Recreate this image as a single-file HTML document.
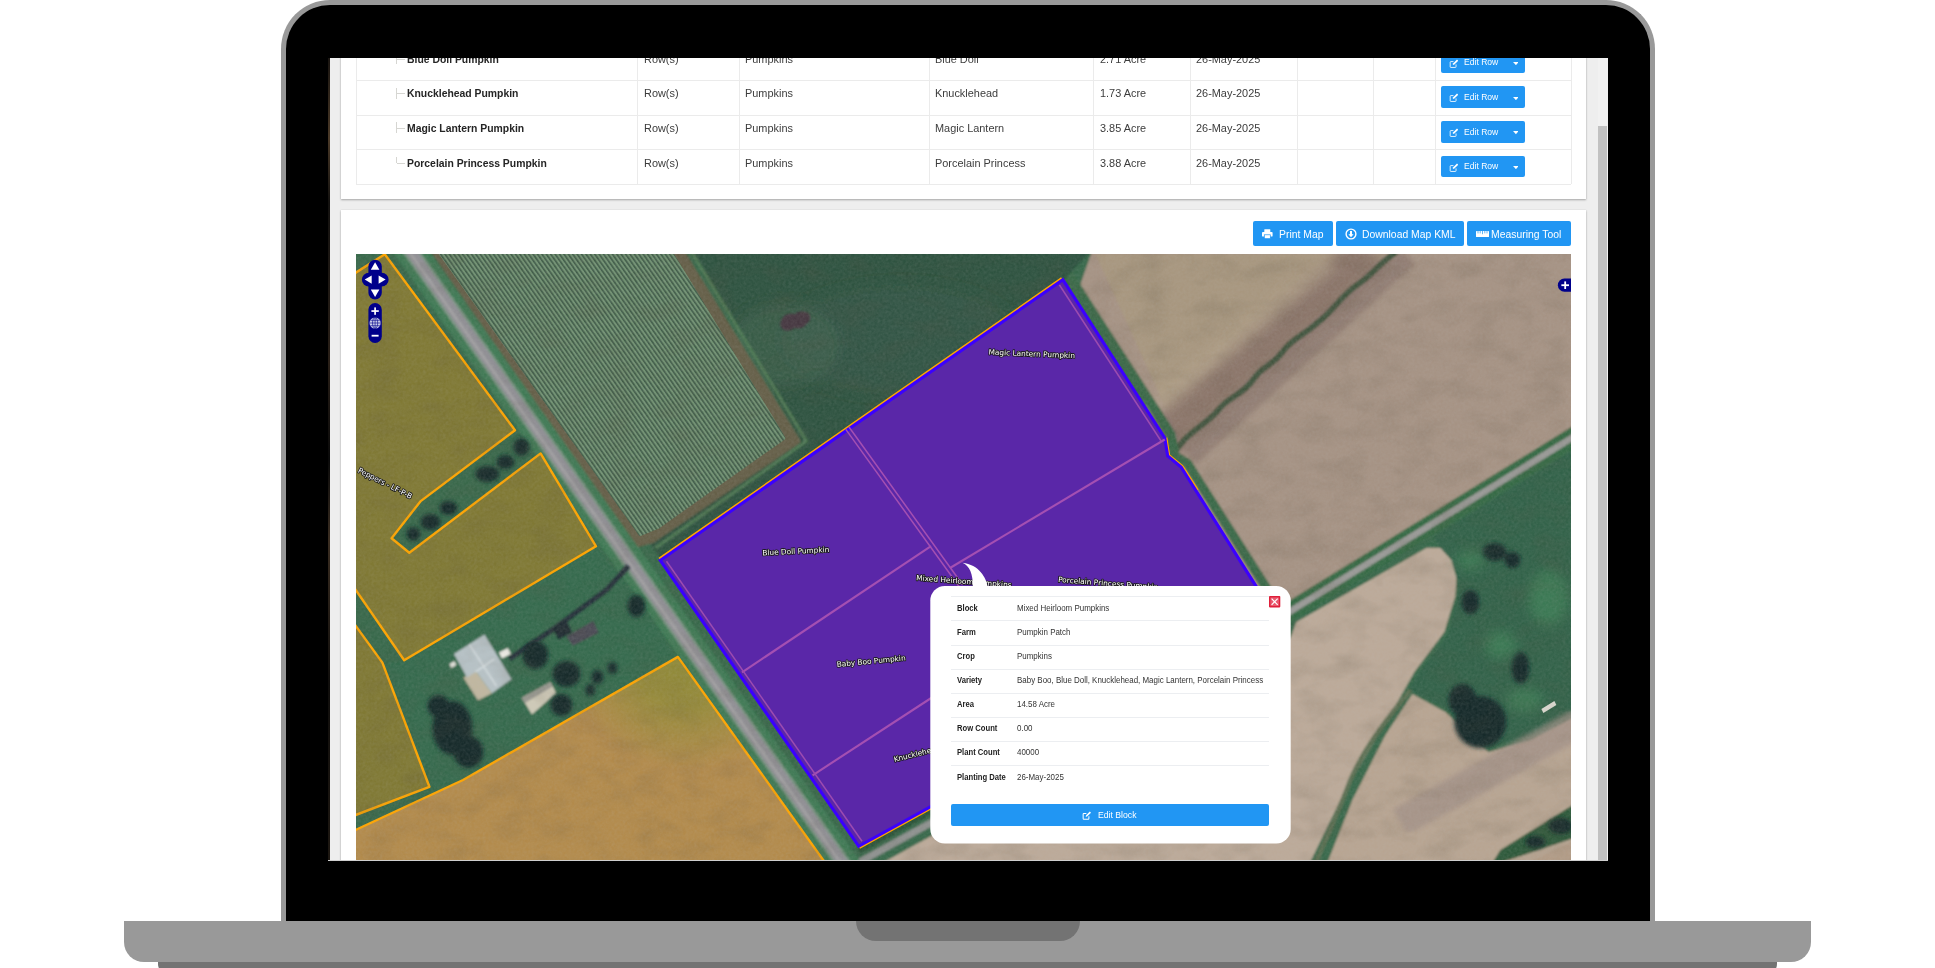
<!DOCTYPE html>
<html lang="en">
<head>
<meta charset="utf-8">
<title>Farm Map</title>
<style>
*{box-sizing:border-box;margin:0;padding:0}
html,body{width:1935px;height:968px;overflow:hidden;background:#fff}
body{position:relative;font-family:"Liberation Sans",sans-serif;color:#333}
#lid{position:absolute;left:281px;top:0;width:1374px;height:940px;background:#000;border:5px solid #999;border-bottom:0;border-radius:49px 49px 0 0}
#base{position:absolute;left:124px;top:921px;width:1687px;height:41px;background:#999;border-radius:0 0 20px 20px}
#notch{position:absolute;left:856px;top:921px;width:224px;height:20px;background:#737373;border-radius:0 0 20px 20px}
#foot{position:absolute;left:158px;top:962px;width:1619px;height:12px;background:#737373;border-radius:0 0 10px 10px}
#screen{position:absolute;left:328px;top:58px;width:1280px;height:803px;background:#eee;overflow:hidden}
#pg{position:absolute;left:-328px;top:-58px;width:1935px;height:968px;will-change:transform}
.card{position:absolute;background:#fff;box-shadow:0 1px 2px rgba(0,0,0,.3),0 0 1px rgba(0,0,0,.12)}
.hl{position:absolute;height:1px;background:#ebebeb;left:356px;width:1215px}
.vl{position:absolute;width:1px;background:#ebebeb;top:40px;height:144px}
.t{position:absolute;white-space:nowrap;font-size:10.6px;line-height:14px;color:#3c3c3c;transform-origin:0 50%;transform:scaleX(1.03)}
.t.b{font-weight:bold;font-size:10.4px;color:#252525;transform:scaleX(1.0)}
.btn{position:absolute;background:#2196f3;border-radius:2px;color:#fff;white-space:nowrap}
.btn span{position:absolute;white-space:nowrap;transform-origin:0 50%}
.btn svg{position:absolute}
.tree{position:absolute;border-left:1px solid #d6d6d2;border-bottom:0;width:8px}
.tree i{position:absolute;left:0;width:8px;height:1px;background:#d6d6d2}
</style>
</head>
<body>
<div id="lid"></div>
<div id="base"></div>
<div id="notch"></div>
<div id="foot"></div>
<div id="screen"><div id="pg">

<div style="position:absolute;left:328px;top:58px;width:2px;height:802px;background:linear-gradient(#1a1511,#4b3a28 10%,#141210 18%,#2a2018 38%,#0a0a0a 50%,#3b2e22 60%,#100e0c 78%,#1e1812)"></div>
<div id="bottomline" style="position:absolute;left:328px;top:860px;width:1280px;height:1px;background:#cfcfcf;z-index:9"></div>
<div class="card" style="left:341px;top:20px;width:1245px;height:179px"></div>
<div class="card" style="left:341px;top:210px;width:1245px;height:700px"></div>
<div style="position:absolute;left:1598px;top:58px;width:10px;height:802px;background:#f1f1f1"></div>
<div style="position:absolute;left:1598px;top:126px;width:9px;height:760px;background:#c1c1c1"></div>
<div class="hl" style="top:79.8px"></div>
<div class="hl" style="top:114.5px"></div>
<div class="hl" style="top:149.2px"></div>
<div class="hl" style="top:183.9px"></div>
<div class="vl" style="left:356px"></div>
<div class="vl" style="left:637.4px"></div>
<div class="vl" style="left:738.7px"></div>
<div class="vl" style="left:928.8px"></div>
<div class="vl" style="left:1092.6px"></div>
<div class="vl" style="left:1189.6px"></div>
<div class="vl" style="left:1296.7px"></div>
<div class="vl" style="left:1372.8px"></div>
<div class="vl" style="left:1434.7px"></div>
<div class="vl" style="left:1570.5px"></div>
<div class="t b" style="left:407px;top:52.6px">Blue Doll Pumpkin</div>
<div class="t" style="left:644.4px;top:51.6px">Row(s)</div>
<div class="t" style="left:745.4px;top:51.6px">Pumpkins</div>
<div class="t" style="left:935px;top:51.6px">Blue Doll</div>
<div class="t" style="left:1099.6px;top:51.6px">2.71 Acre</div>
<div class="t" style="left:1195.8px;top:51.6px">26-May-2025</div>
<div class="tree" style="left:396px;top:53.0px;height:11px"><i style="top:5.5px"></i></div>
<div class="btn" style="left:1441.2px;top:51.6px;width:84px;height:21.8px"><svg style="left:7.6px;top:7.2px" width="9.4" height="9.4" viewBox="0 0 20 20" fill="none" stroke="#fff" stroke-width="1.8"><path d="M15 11.5V16.5a1.5 1.5 0 0 1-1.5 1.5H4a1.5 1.5 0 0 1-1.5-1.5V7A1.5 1.5 0 0 1 4 5.5h5.5"/><path d="M8 13l1-4 8-8 2.6 2.6-8 8z" fill="#fff" stroke="none"/></svg><span style="left:23px;top:4.7px;font-size:9.2px;line-height:12px;transform:scaleX(.932)">Edit Row</span><svg style="left:71.5px;top:10.4px" width="5.8" height="3.2" viewBox="0 0 6 3.4"><path d="M0 0h6L3 3.4z" fill="#fff"/></svg></div>
<div class="t b" style="left:407px;top:87.3px">Knucklehead Pumpkin</div>
<div class="t" style="left:644.4px;top:86.2px">Row(s)</div>
<div class="t" style="left:745.4px;top:86.2px">Pumpkins</div>
<div class="t" style="left:935px;top:86.2px">Knucklehead</div>
<div class="t" style="left:1099.6px;top:86.2px">1.73 Acre</div>
<div class="t" style="left:1195.8px;top:86.2px">26-May-2025</div>
<div class="tree" style="left:396px;top:87.7px;height:11px"><i style="top:5.5px"></i></div>
<div class="btn" style="left:1441.2px;top:86.3px;width:84px;height:21.8px"><svg style="left:7.6px;top:7.2px" width="9.4" height="9.4" viewBox="0 0 20 20" fill="none" stroke="#fff" stroke-width="1.8"><path d="M15 11.5V16.5a1.5 1.5 0 0 1-1.5 1.5H4a1.5 1.5 0 0 1-1.5-1.5V7A1.5 1.5 0 0 1 4 5.5h5.5"/><path d="M8 13l1-4 8-8 2.6 2.6-8 8z" fill="#fff" stroke="none"/></svg><span style="left:23px;top:4.7px;font-size:9.2px;line-height:12px;transform:scaleX(.932)">Edit Row</span><svg style="left:71.5px;top:10.4px" width="5.8" height="3.2" viewBox="0 0 6 3.4"><path d="M0 0h6L3 3.4z" fill="#fff"/></svg></div>
<div class="t b" style="left:407px;top:122.0px">Magic Lantern Pumpkin</div>
<div class="t" style="left:644.4px;top:121.0px">Row(s)</div>
<div class="t" style="left:745.4px;top:121.0px">Pumpkins</div>
<div class="t" style="left:935px;top:121.0px">Magic Lantern</div>
<div class="t" style="left:1099.6px;top:121.0px">3.85 Acre</div>
<div class="t" style="left:1195.8px;top:121.0px">26-May-2025</div>
<div class="tree" style="left:396px;top:122.4px;height:11px"><i style="top:5.5px"></i></div>
<div class="btn" style="left:1441.2px;top:121.0px;width:84px;height:21.8px"><svg style="left:7.6px;top:7.2px" width="9.4" height="9.4" viewBox="0 0 20 20" fill="none" stroke="#fff" stroke-width="1.8"><path d="M15 11.5V16.5a1.5 1.5 0 0 1-1.5 1.5H4a1.5 1.5 0 0 1-1.5-1.5V7A1.5 1.5 0 0 1 4 5.5h5.5"/><path d="M8 13l1-4 8-8 2.6 2.6-8 8z" fill="#fff" stroke="none"/></svg><span style="left:23px;top:4.7px;font-size:9.2px;line-height:12px;transform:scaleX(.932)">Edit Row</span><svg style="left:71.5px;top:10.4px" width="5.8" height="3.2" viewBox="0 0 6 3.4"><path d="M0 0h6L3 3.4z" fill="#fff"/></svg></div>
<div class="t b" style="left:407px;top:156.8px">Porcelain Princess Pumpkin</div>
<div class="t" style="left:644.4px;top:155.7px">Row(s)</div>
<div class="t" style="left:745.4px;top:155.7px">Pumpkins</div>
<div class="t" style="left:935px;top:155.7px">Porcelain Princess</div>
<div class="t" style="left:1099.6px;top:155.7px">3.88 Acre</div>
<div class="t" style="left:1195.8px;top:155.7px">26-May-2025</div>
<div class="tree" style="left:396px;top:157.1px;height:6px"><i style="top:5.5px"></i></div>
<div class="btn" style="left:1441.2px;top:155.7px;width:84px;height:21.8px"><svg style="left:7.6px;top:7.2px" width="9.4" height="9.4" viewBox="0 0 20 20" fill="none" stroke="#fff" stroke-width="1.8"><path d="M15 11.5V16.5a1.5 1.5 0 0 1-1.5 1.5H4a1.5 1.5 0 0 1-1.5-1.5V7A1.5 1.5 0 0 1 4 5.5h5.5"/><path d="M8 13l1-4 8-8 2.6 2.6-8 8z" fill="#fff" stroke="none"/></svg><span style="left:23px;top:4.7px;font-size:9.2px;line-height:12px;transform:scaleX(.932)">Edit Row</span><svg style="left:71.5px;top:10.4px" width="5.8" height="3.2" viewBox="0 0 6 3.4"><path d="M0 0h6L3 3.4z" fill="#fff"/></svg></div>
<div class="btn" style="left:1252.6px;top:221.2px;width:80.2px;height:25.2px"><svg style="left:9.6px;top:7.6px" width="10.6" height="10" viewBox="0 0 12 11" fill="#fff"><rect x="2.6" y="0" width="6.8" height="3.6" rx=".5"/><rect x="0" y="3.2" width="12" height="5.2" rx="1"/><rect x="2.6" y="6.4" width="6.8" height="4.4" stroke="#2196f3" stroke-width=".8"/></svg><span style="left:26.4px;top:5.5px;font-size:10.7px;line-height:14px;transform:scaleX(.972)">Print Map</span></div>
<div class="btn" style="left:1336px;top:221.2px;width:127.9px;height:25.2px"><svg style="left:9px;top:6.4px" width="12" height="12" viewBox="0 0 12 12"><circle cx="6" cy="6" r="4.9" fill="none" stroke="#fff" stroke-width="1.4"/><path d="M6 9.2L3.4 6.3H5V3h2v3.3h1.6z" fill="#fff"/></svg><span style="left:26.4px;top:5.5px;font-size:10.7px;line-height:14px;transform:scaleX(.972)">Download Map KML</span></div>
<div class="btn" style="left:1467.3px;top:221.2px;width:103.8px;height:25.2px"><svg style="left:8.6px;top:9.6px" width="13" height="6" viewBox="0 0 13 6"><rect x="0" y="0" width="13" height="6" rx=".6" fill="#fff"/><path d="M2 0v2.4M4.2 0v2.4M6.5 0v3.2M8.8 0v2.4M11 0v2.4" stroke="#2196f3" stroke-width=".7"/></svg><span style="left:23.6px;top:5.5px;font-size:10.7px;line-height:14px;transform:scaleX(.972)">Measuring Tool</span></div>
<svg style="position:absolute;left:355.6px;top:254px" width="1215.4" height="606" viewBox="355.6 254 1215.4 606">
<defs>
<pattern id="stripe" width="3.6" height="10" patternUnits="userSpaceOnUse" patternTransform="rotate(-35.2)"><rect width="3.6" height="10" fill="#719172"/><rect width="1.6" height="10" fill="#3f5b48"/></pattern>
<filter id="bl" x="-5%" y="-5%" width="110%" height="110%"><feGaussianBlur stdDeviation="1.1"/></filter>
<filter id="bl0" x="-5%" y="-5%" width="110%" height="110%"><feGaussianBlur stdDeviation="0.45"/></filter>
<filter id="bl2" x="-10%" y="-10%" width="120%" height="120%"><feGaussianBlur stdDeviation="2.2"/></filter>
<filter id="bl5" x="-20%" y="-20%" width="140%" height="140%"><feGaussianBlur stdDeviation="6"/></filter>
<filter id="noise" x="0" y="0" width="100%" height="100%"><feTurbulence type="fractalNoise" baseFrequency="0.35" numOctaves="2" seed="7"/><feColorMatrix values="0 0 0 0 0.5  0 0 0 0 0.5  0 0 0 0 0.5  0.9 0.9 0.9 0 -0.95"/></filter>
<filter id="noise2" x="0" y="0" width="100%" height="100%"><feTurbulence type="fractalNoise" baseFrequency="0.03 0.05" numOctaves="3" seed="11"/><feColorMatrix values="0 0 0 0 0.1  0 0 0 0 0.08  0 0 0 0 0.05  1.2 1.2 0 0 -1.05"/></filter>
<radialGradient id="gC" gradientUnits="userSpaceOnUse" cx="688" cy="645" r="125"><stop offset="0" stop-color="#8c8936"/><stop offset=".5" stop-color="#978b3b"/><stop offset="1" stop-color="#b38b4c"/></radialGradient>
<clipPath id="clipC"><polygon points="356,829.5 462.6,780 677.5,656.9 823.5,860 356,860"/></clipPath>
</defs>
<g filter="url(#bl)">
<rect x="340" y="240" width="1250" height="640" fill="#37694b"/>
<polygon points="1092.0,250.0 1580.0,250.0 1580.0,433.0 1296.0,601.0 1262.0,601.0 1183.0,470.0 1176.0,447.0 1078.0,290.0" fill="#a69384"/>
<polygon points="1095.0,254.0 1385.0,254.0 1180.0,440.0" fill="#a8977f"/>
<path d="M1372 250 L1150 448" stroke="#7b645f" stroke-width="44" opacity=".62" fill="none" filter="url(#bl5)"/>
<path d="M1408 256 L1188 456" stroke="#846f68" stroke-width="22" opacity=".55" fill="none" filter="url(#bl2)"/>
<path d="M1330 262 L1140 420" stroke="#b9a891" stroke-width="18" opacity=".5" fill="none" filter="url(#bl5)"/>
<path d="M1396 252 C1380 262 1372 275 1358 284 C1340 296 1334 310 1318 322 C1300 338 1292 338 1282 352 C1272 366 1262 366 1254 378 C1242 396 1228 396 1218 410 C1206 424 1192 430 1182 442 L1174 452" stroke="#42573f" stroke-width="6" fill="none" stroke-linejoin="round"/>
<path d="M1590 426.5 L1240 642" stroke="#356a44" stroke-width="19" fill="none"/>
<path d="M1590 426.5 L1240 642" stroke="#9a9a97" stroke-width="6.5" fill="none"/>
<polygon points="1580.0,446.0 1433.0,537.0 1455.0,573.0 1458.0,592.0 1448.0,634.0 1418.0,674.0 1408.0,690.0 1445.0,708.0 1488.0,748.0 1530.0,736.0 1580.0,710.0" fill="#31624a"/>
<polygon points="871.0,869.0 1290.0,638.0 1296.0,622.0 1426.0,548.0 1440.0,548.0 1451.0,560.0 1456.0,578.0 1455.0,596.0 1444.0,632.0 1414.0,672.0 1396.0,704.0 1345.0,790.0 1306.0,870.0" fill="#bcaa99"/>
<path d="M852 866 L1284 628.6" stroke="#8f9290" stroke-width="7" fill="none"/>
<path d="M858 851 L1278 620" stroke="#2c5238" stroke-width="6" fill="none"/>
<polygon points="1412.0,694.0 1445.0,712.0 1488.0,752.0 1530.0,740.0 1580.0,714.0 1580.0,870.0 1324.0,870.0 1352.0,800.0 1385.0,735.0" fill="#b8a592"/>
<path d="M1580 722 L1400 822" stroke="#a08f86" stroke-width="30" opacity=".7" fill="none" filter="url(#bl2)"/>
<path d="M1410 690 C1390 715 1365 745 1350 780 C1338 812 1325 840 1314 866" stroke="#5b7052" stroke-width="4.5" fill="none"/>
<polygon points="1580.0,800.0 1545.0,822.0 1500.0,850.0 1490.0,866.0 1580.0,836.0" fill="#2e5a3a"/>
<polygon points="1520.0,866.0 1580.0,838.0 1580.0,866.0" fill="#b39d88"/>
<path d="M1064 268 L1170.5 434.5 L1174.5 456 L1187 463.5 L1285 618" stroke="#3a6a48" stroke-width="9.5" fill="none"/>
<polygon points="690.0,250.0 1092.0,250.0 1064.0,279.0 661.0,560.0 648.0,541.0 801.0,441.0" fill="#2e523f"/>
<ellipse cx="900" cy="340" rx="120" ry="55" fill="#35594a" opacity=".6" filter="url(#bl5)"/>
<ellipse cx="785" cy="345" rx="55" ry="42" fill="#4a6a55" opacity=".4" filter="url(#bl5)"/>
<polygon points="433.0,250.0 680.0,250.0 797.0,441.0 652.0,540.0 637.0,544.0" fill="#666049" stroke="#666049" stroke-width="6" stroke-linejoin="round"/>
<path d="M690 250 L806 441 L655 548" stroke="#4f7a55" stroke-width="3" fill="none"/>
<path d="M402.5 240 L854.4 880" stroke="#3f7a55" stroke-width="30" fill="none"/>
<path d="M402.5 240 L854.4 880" stroke="#93a096" stroke-width="15" opacity=".7" fill="none"/>
<path d="M402.5 240 L854.4 880" stroke="#908f94" stroke-width="10.5" fill="none"/>
<path d="M400.5 240 L852.4 880" stroke="#a3a2a3" stroke-width="2.5" fill="none"/>
</g>
<g filter="url(#bl0)"><polygon points="438.0,250.0 669.0,250.0 783.0,438.0 657.0,527.0 640.0,534.0" fill="url(#stripe)" stroke="url(#stripe)" stroke-width="4" stroke-linejoin="round"/></g>
<path d="M781 320 q4 -8 13 -6 q6 -5 14 -1 q5 6 -2 11 q-4 6 -12 4 q-6 5 -12 1 q-4 -4 -1 -9z" fill="#4a3340" opacity=".85" filter="url(#bl)"/>
<g filter="url(#bl)">
<polygon points="404.0,661.0 596.0,547.0 640.0,600.0 676.0,658.0 462.0,781.0 430.0,788.0 384.0,664.0" fill="#346b4d"/>
<path d="M628 566 L606 590 L556 627 L509 659" stroke="#27323a" stroke-width="5.5" fill="none"/>
<polygon points="462.8,677.4 475.8,671.8 491.6,693.2 477.6,700.6" fill="#c0b7a0"/>
<polygon points="453.5,654.1 484.1,634.6 494.3,651.3 511.1,679.2 491.6,693.2 475.8,671.8 466.5,677.4" fill="#b7c2c6"/>
<path d="M469 644.5 L496 686 M475 672 L494 659" stroke="#dfe6e8" stroke-width="1.2" fill="none"/>
<polygon points="521.3,697.8 550.1,682.0 555.7,693.2 531.5,714.5" fill="#cfcab8"/>
<polygon points="521.3,697.8 550.1,682.0 552.4,686.6 524.5,703.0" fill="#97978f"/>
<polygon points="565.9,636.5 592.9,620.7 598.4,632.8 572.4,645.8" fill="#4b4b54"/>
<polygon points="552.0,628.0 566.0,620.0 572.0,632.0 558.0,640.0" fill="#1c2a30"/>
<polygon points="498.5,652.5 507.5,648.0 510.5,654.0 501.5,658.5" fill="#ecebe4"/>
<polygon points="449.0,664.0 454.0,661.0 456.0,665.0 451.0,668.0" fill="#e4e2dc"/>
</g>
<g fill="#14292b" filter="url(#bl2)">
<ellipse cx="452" cy="728" rx="20" ry="27"/>
<ellipse cx="468" cy="752" rx="15" ry="16"/>
<ellipse cx="438" cy="706" rx="11" ry="11"/>
<ellipse cx="535" cy="655" rx="13" ry="14"/>
<ellipse cx="566" cy="674" rx="14" ry="13"/>
<ellipse cx="561" cy="705" rx="11" ry="11"/>
<ellipse cx="636" cy="606" rx="9" ry="11"/>
<ellipse cx="597" cy="677" rx="6" ry="7"/>
<ellipse cx="612" cy="668" rx="5" ry="6"/>
<ellipse cx="590" cy="690" rx="5" ry="6"/>
<ellipse cx="430" cy="522" rx="10" ry="8"/>
<ellipse cx="448" cy="508" rx="9" ry="7"/>
<ellipse cx="487" cy="474" rx="12" ry="8"/>
<ellipse cx="505" cy="462" rx="9" ry="7"/>
<ellipse cx="521" cy="447" rx="8" ry="9"/>
<ellipse cx="413" cy="534" rx="7" ry="7"/>
<ellipse cx="1480" cy="722" rx="26" ry="26"/>
<ellipse cx="1462" cy="700" rx="14" ry="16"/>
<ellipse cx="1520" cy="668" rx="9" ry="16"/>
<ellipse cx="1470" cy="602" rx="9" ry="12"/>
<ellipse cx="1494" cy="552" rx="12" ry="9"/>
<ellipse cx="1512" cy="560" rx="8" ry="8"/>
<ellipse cx="1560" cy="826" rx="12" ry="8"/>
<ellipse cx="1535" cy="842" rx="10" ry="6"/>
</g>
<g fill="#45905f" opacity=".5" filter="url(#bl5)"><ellipse cx="1548" cy="598" rx="20" ry="28"/><ellipse cx="1524" cy="700" rx="18" ry="12"/><ellipse cx="1500" cy="645" rx="16" ry="14"/><ellipse cx="1470" cy="560" rx="14" ry="10"/></g>
<polygon points="1541.0,709.0 1554.0,701.0 1556.0,705.0 1543.0,713.0" fill="#e3e0d8"/>
<polygon points="354.0,273.5 384.4,254.3 514.6,430.3 420.0,501.4 391.2,538.3 408.9,552.7 540.2,453.4 595.6,546.3 403.8,660.2 354.0,588.0" fill="#857b33" fill-opacity=".93" stroke="#ffa500" stroke-width="2.4" stroke-linejoin="round"/>
<polygon points="354.0,624.0 382.0,662.6 429.0,786.8 354.0,815.5" fill="#857b33" fill-opacity=".93" stroke="#ffa500" stroke-width="2.4" stroke-linejoin="round"/>
<polygon points="354.0,830.5 462.6,780.0 677.5,656.9 823.5,861.0 354.0,862.0" fill="url(#gC)" stroke="#ffa500" stroke-width="2.4" stroke-linejoin="round"/>
<rect x="355" y="254" width="1217" height="606" filter="url(#noise2)" opacity=".18"/>
<rect x="355" y="254" width="1217" height="606" filter="url(#noise)" opacity=".12"/>
<path d="M659.9 560.3 L1062.4 279.7" stroke="#ffa500" stroke-width="6" stroke-linecap="butt" fill="none"/>
<path d="M858.3 846.3 L1275 617" stroke="#ffa500" stroke-width="5.4" stroke-linecap="butt" fill="none"/>
<path d="M1164.4 438 L1167.3 456 L1180.7 467 L1196 491" stroke="#ffa500" stroke-width="5.2" fill="none"/>
<polygon points="1062.4,279.7 1164.4,438.0 1167.3,456.0 1180.7,467.0 1275.0,617.0 858.3,846.3 659.9,560.3" fill="#5a27a8" stroke="#3b00ff" stroke-width="3.1" stroke-linejoin="miter"/>
<g stroke="#a44fb2" stroke-width="2.1" fill="none">
<path d="M845.4 429.4 L959 587" stroke-width="1.5"/><path d="M848.6 427 L962.4 585" stroke-width="1.5"/>
<path d="M1164.4 439.5 L949.6 568"/>
<path d="M741.6 672.3 L930.6 546.2"/>
<path d="M812.2 775.3 L940 692"/>
<path d="M1062.4 283 L1164 439" stroke="#9c4bb0" stroke-width="1.7" transform="translate(-3.4 1.9)"/>
<path d="M663 563 L858.5 843" stroke="#9c4bb0" stroke-width="1.5" transform="translate(3.1 -1.8)"/>
</g>
<text x="988" y="354.5" transform="rotate(2.5 988 354.5)" font-family="DejaVu Sans, Liberation Sans, sans-serif" font-size="7.4" fill="#fff" stroke="#1c1c1c" stroke-width="1.8" stroke-linejoin="round" paint-order="stroke">Magic Lantern Pumpkin</text>
<text x="762" y="555.5" transform="rotate(-3 762 555.5)" font-family="DejaVu Sans, Liberation Sans, sans-serif" font-size="7.4" fill="#fff" stroke="#1c1c1c" stroke-width="1.8" stroke-linejoin="round" paint-order="stroke">Blue Doll Pumpkin</text>
<text x="836.5" y="667" transform="rotate(-5.5 836.5 667)" font-family="DejaVu Sans, Liberation Sans, sans-serif" font-size="7.4" fill="#fff" stroke="#1c1c1c" stroke-width="1.8" stroke-linejoin="round" paint-order="stroke">Baby Boo Pumpkin</text>
<text x="915.7" y="580.3" transform="rotate(4.3 915.7 580.3)" font-family="DejaVu Sans, Liberation Sans, sans-serif" font-size="7.4" fill="#fff" stroke="#1c1c1c" stroke-width="1.8" stroke-linejoin="round" paint-order="stroke">Mixed Heirloom Pumpkins</text>
<text x="1057.5" y="582" transform="rotate(4.5 1057.5 582)" font-family="DejaVu Sans, Liberation Sans, sans-serif" font-size="7.4" fill="#fff" stroke="#1c1c1c" stroke-width="1.8" stroke-linejoin="round" paint-order="stroke">Porcelain Princess Pumpkin</text>
<text x="894" y="762" transform="rotate(-14 894 762)" font-family="DejaVu Sans, Liberation Sans, sans-serif" font-size="7.4" fill="#fff" stroke="#1c1c1c" stroke-width="1.8" stroke-linejoin="round" paint-order="stroke">Knucklehead Pumpkin</text>
<text x="357" y="472" transform="rotate(27 357 472)" font-family="DejaVu Sans, Liberation Sans, sans-serif" font-size="7.4" fill="#fff" stroke="#1c1c1c" stroke-width="1.8" stroke-linejoin="round" paint-order="stroke">Peppers - LF-P-B</text>
<g fill="#00008b"><rect x="368" y="259.7" width="13.4" height="39.8" rx="6.7"/><rect x="361.5" y="272.7" width="26.7" height="13.9" rx="6.9"/><rect x="368" y="303.1" width="13.4" height="39.8" rx="6.7"/>
<path d="M1571 278.6 h-7 a6.5 6.5 0 0 0 0 13.1 h7z"/></g>
<g fill="#fff"><path d="M374.7 262.3 l4.3 7.4 h-8.6z"/><path d="M374.7 297 l4.3 -7.4 h-8.6z"/><path d="M364.3 279.6 l7 -4.2 v8.4z"/><path d="M385.2 279.6 l-7 -4.2 v8.4z"/>
<rect x="371" y="310.2" width="7.4" height="1.7"/><rect x="373.85" y="307.4" width="1.7" height="7.4"/><rect x="371.2" y="334.8" width="7" height="1.8"/>
<rect x="1561" y="284.3" width="7.6" height="1.8"/><rect x="1563.9" y="281.4" width="1.8" height="7.6"/></g>
<circle cx="374.7" cy="323" r="5.6" fill="#c8cbe8"/><g stroke="#00008b" stroke-width=".6" fill="none"><ellipse cx="374.7" cy="323" rx="2.6" ry="5.4"/><path d="M369.2 323h11M370 320.3h9.4M370 325.7h9.4M374.7 317.5v11"/></g>
</svg>
<style>.pk,.pv{position:absolute;white-space:nowrap;line-height:11px;transform-origin:0 50%}.pk{left:956.6px;font-size:8.6px;font-weight:bold;color:#222;transform:scaleX(.89)}.pv{left:1017.2px;font-size:8.6px;color:#333;transform:scaleX(.925)}</style>
<svg style="position:absolute;left:925px;top:555px" width="375" height="295" viewBox="925 555 375 295">
<path d="M962.4 562.7 C969.5 565.5 973.2 574 972.8 587 L987.7 587 C986.5 578 979 564.5 962.4 562.7Z" fill="#fff"/>
<rect x="930.3" y="586" width="360.4" height="257.5" rx="14.5" fill="#fff"/>
</svg>
<div style="position:absolute;left:950.5px;top:596.3px;width:318px;height:1px;background:#eceef1"></div>
<div class="pk" style="top:602.7px">Block</div>
<div class="pv" style="top:602.7px">Mixed Heirloom Pumpkins</div>
<div style="position:absolute;left:950.5px;top:620.4px;width:318px;height:1px;background:#eceef1"></div>
<div class="pk" style="top:626.8px">Farm</div>
<div class="pv" style="top:626.8px">Pumpkin Patch</div>
<div style="position:absolute;left:950.5px;top:644.5px;width:318px;height:1px;background:#eceef1"></div>
<div class="pk" style="top:650.9px">Crop</div>
<div class="pv" style="top:650.9px">Pumpkins</div>
<div style="position:absolute;left:950.5px;top:668.7px;width:318px;height:1px;background:#eceef1"></div>
<div class="pk" style="top:675.1px">Variety</div>
<div class="pv" style="top:675.1px">Baby Boo, Blue Doll, Knucklehead, Magic Lantern, Porcelain Princess</div>
<div style="position:absolute;left:950.5px;top:692.8px;width:318px;height:1px;background:#eceef1"></div>
<div class="pk" style="top:699.2px">Area</div>
<div class="pv" style="top:699.2px">14.58 Acre</div>
<div style="position:absolute;left:950.5px;top:716.9px;width:318px;height:1px;background:#eceef1"></div>
<div class="pk" style="top:723.3px">Row Count</div>
<div class="pv" style="top:723.3px">0.00</div>
<div style="position:absolute;left:950.5px;top:741.0px;width:318px;height:1px;background:#eceef1"></div>
<div class="pk" style="top:747.4px">Plant Count</div>
<div class="pv" style="top:747.4px">40000</div>
<div style="position:absolute;left:950.5px;top:765.1px;width:318px;height:1px;background:#eceef1"></div>
<div class="pk" style="top:771.5px">Planting Date</div>
<div class="pv" style="top:771.5px">26-May-2025</div>
<svg style="position:absolute;left:1269.3px;top:596.3px" width="11.3" height="11.4" viewBox="0 0 11.3 11.4"><rect width="11.3" height="11.4" rx=".8" fill="#e01f3a"/><rect x="1.4" y="1.4" width="8.5" height="8.6" fill="#ec6f82" opacity=".75"/><path d="M2.6 2.7L8.7 8.8M8.7 2.7L2.6 8.8" stroke="#fff" stroke-width="1.15"/></svg>
<div class="btn" style="left:950.5px;top:804px;width:318.2px;height:21.9px"><svg style="left:131.8px;top:6.6px" width="9.2" height="9.2" viewBox="0 0 20 20" fill="none" stroke="#fff" stroke-width="2.2"><path d="M15 11.5V16.5a1.5 1.5 0 0 1-1.5 1.5H4a1.5 1.5 0 0 1-1.5-1.5V7A1.5 1.5 0 0 1 4 5.5h5.5"/><path d="M8 13l1-4 8-8 2.6 2.6-8 8z" fill="#fff" stroke="none"/></svg><span style="left:147.2px;top:5.2px;font-size:9.6px;line-height:12px;transform:scaleX(.903)">Edit Block</span></div>
</div></div>
</body>
</html>
